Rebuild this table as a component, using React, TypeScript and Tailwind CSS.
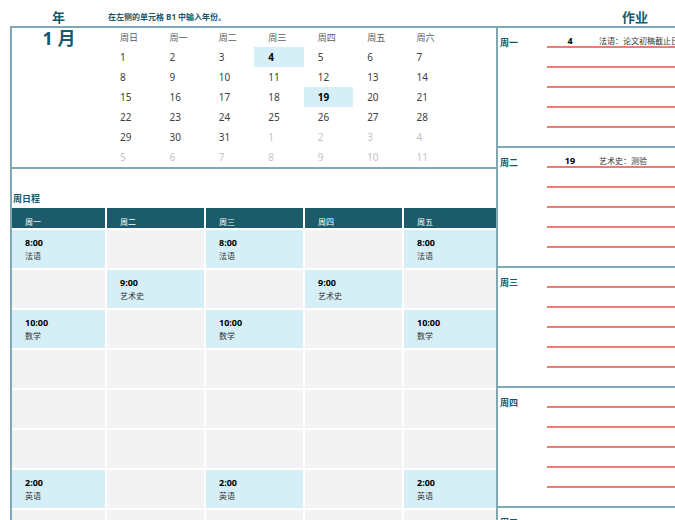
import React from "react";

const calRows: { d: number; muted?: boolean; hl?: boolean }[][] = [
  [1, 2, 3, 4, 5, 6, 7].map((d) => ({ d, hl: d === 4 })),
  [8, 9, 10, 11, 12, 13, 14].map((d) => ({ d })),
  [15, 16, 17, 18, 19, 20, 21].map((d) => ({ d, hl: d === 19 })),
  [22, 23, 24, 25, 26, 27, 28].map((d) => ({ d })),
  [
    { d: 29 },
    { d: 30 },
    { d: 31 },
    { d: 1, muted: true },
    { d: 2, muted: true },
    { d: 3, muted: true },
    { d: 4, muted: true },
  ],
  [5, 6, 7, 8, 9, 10, 11].map((d) => ({ d, muted: true })),
];

const weekHead = ["周日", "周一", "周二", "周三", "周四", "周五", "周六"];
const tableHead = ["周一", "周二", "周三", "周四", "周五"];

type Cell = { t: string; s: string } | null;
const F: Cell = { t: "8:00", s: "法语" };
const A: Cell = { t: "9:00", s: "艺术史" };
const M: Cell = { t: "10:00", s: "数学" };
const E: Cell = { t: "2:00", s: "英语" };
const schedule: Cell[][] = [
  [F, null, F, null, F],
  [null, A, null, A, null],
  [M, null, M, null, M],
  [null, null, null, null, null],
  [null, null, null, null, null],
  [null, null, null, null, null],
  [E, null, E, null, E],
  [null, null, null, null, null],
];

const homework: { day: string; date?: string; text?: string }[] = [
  { day: "周一", date: "4", text: "法语：论文初稿截止日" },
  { day: "周二", date: "19", text: "艺术史：测验" },
  { day: "周三" },
  { day: "周四" },
  { day: "周五" },
];

export default function App() {
  return (
    <div className="w-[675px] h-[520px] overflow-hidden bg-white font-['Noto_Sans','Noto_Sans_CJK_SC',sans-serif]">
      {/* title row */}
      <div className="h-[26px] flex items-end pb-[2px] text-[#17596a] font-bold">
        <div className="w-[108px] pl-[52px] text-[13px] leading-none">年</div>
        <div className="text-[8px] leading-none pb-[3px]">在左侧的单元格 B1 中输入年份。</div>
        <div className="flex-1" />
        <div className="mr-[27px] text-[13px] leading-none">作业</div>
      </div>

      <div className="flex">
        {/* left panel */}
        <div className="ml-[10px] w-[488px] shrink-0 border-l-2 border-t-2 border-r-2 border-[#80a8b2]">
          {/* calendar */}
          <div className="flex border-b-2 border-[#80a8b2]">
            <div className="w-[94px] text-center text-[18px] font-bold leading-none text-[#17596a] pt-[1px]">
              1 月
            </div>
            <div className="w-[346px] grid grid-cols-7">
              {weekHead.map((w) => (
                <div key={w} className="h-[19px] pl-[14px] flex items-center text-[9px] text-[#595959]">
                  {w}
                </div>
              ))}
              {calRows.flat().map((c, i) => (
                <div
                  key={i}
                  className={
                    "h-[20px] pl-[14px] flex items-center text-[10px] " +
                    (c.hl ? "bg-[#d6eff7] font-bold text-black " : "") +
                    (c.muted ? "text-[#c4c4c4]" : c.hl ? "" : "text-[#404040]")
                  }
                >
                  {c.d}
                </div>
              ))}
            </div>
          </div>

          {/* weekly schedule label */}
          <div className="h-[39px] flex items-end pb-[5px] pl-[1px] text-[9px] font-bold text-[#17596a] leading-none">
            周日程
          </div>

          {/* schedule table */}
          <div className="grid grid-cols-[93px_97px_97px_97px_92px] gap-[2px]">
            {tableHead.map((h) => (
              <div
                key={h}
                className="h-[20px] bg-[#1b5b6a] text-white text-[8px] pl-[13px] flex items-end pb-[2px] leading-none"
              >
                {h}
              </div>
            ))}
            {schedule.flat().map((c, i) => (
              <div
                key={i}
                className={
                  "h-[38px] pl-[13px] pt-[7px] " + (c ? "bg-[#d6eff7]" : "bg-[#f3f3f3]")
                }
              >
                {c && (
                  <>
                    <div className="text-[9px] font-bold text-black leading-[12px]">{c.t}</div>
                    <div className="text-[8px] text-[#333333] leading-[13px]">{c.s}</div>
                  </>
                )}
              </div>
            ))}
          </div>
        </div>

        {/* right panel */}
        <div className="flex-1 border-t-2 border-[#80a8b2]">
          {homework.map((h) => (
            <div key={h.day} className="h-[120px] flex border-b-2 border-[#80a8b2]">
              <div className="w-[49px] shrink-0 pl-[2px] pt-[9px] text-[9px] font-bold text-[#17596a] leading-[12px]">
                {h.day}
              </div>
              <div className="flex-1 flex flex-col">
                {[0, 1, 2, 3, 4].map((r) => (
                  <div key={r} className="h-[20px] flex flex-col">
                    <div className="flex-1 flex items-end whitespace-nowrap pb-[1px]">
                      {r === 0 && h.date && (
                        <>
                          <div className="w-[46px] text-center text-[9px] font-bold text-black leading-[9px]">
                            {h.date}
                          </div>
                          <div className="pl-[6px] text-[8px] text-[#333333] leading-[9px]">{h.text}</div>
                        </>
                      )}
                    </div>
                    <div className="h-[2px] shrink-0 bg-[#f07a7a]" />
                  </div>
                ))}
              </div>
            </div>
          ))}
        </div>
      </div>
    </div>
  );
}
